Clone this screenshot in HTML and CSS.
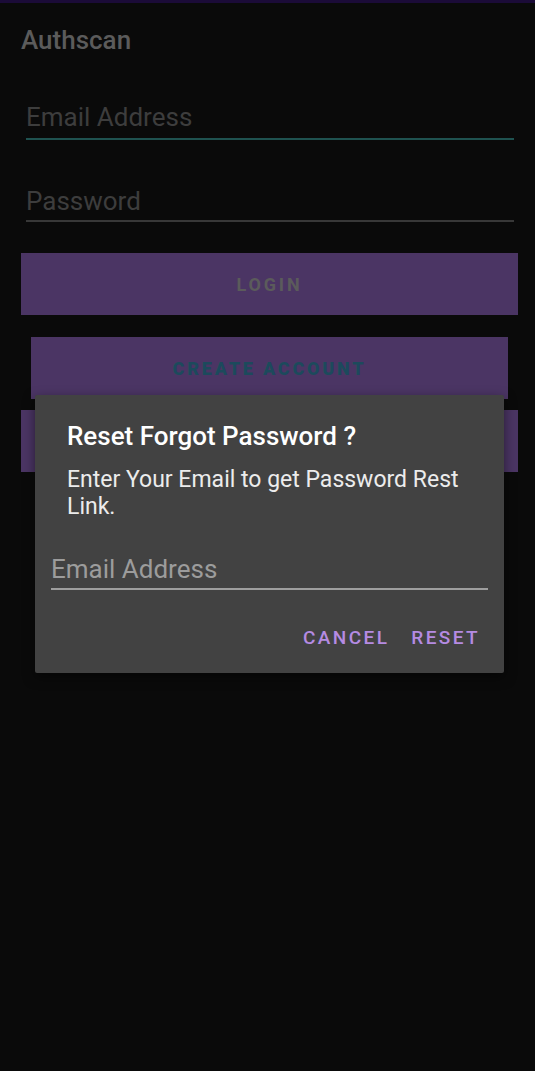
FILE: index.html
```html
<!DOCTYPE html>
<html>
<head>
<meta charset="utf-8">
<link rel="stylesheet" href="styles.css">
</head>
<body>
<div class="status"></div>
<div class="screen">
  <div class="app-title">Authscan</div>
  <div class="field field-focus"><span class="ph">Email Address</span></div>
  <div class="field field-pass"><span class="ph">Password</span></div>
  <div class="btn btn-login">LOGIN</div>
  <div class="btn btn-create">CREATE ACCOUNT</div>
  <div class="btn btn-third"></div>
</div>
<div class="dialog">
  <div class="d-title">Reset Forgot Password ?</div>
  <div class="d-msg">Enter Your Email to get Password Rest Link.</div>
  <div class="d-field"><span class="d-ph">Email Address</span></div>
  <div class="d-actions">
    <span class="d-btn">CANCEL</span>
    <span class="d-btn">RESET</span>
  </div>
</div>
</body>
</html>
```
FILE: styles.css
```css
html, body {
  margin: 0;
  padding: 0;
  background: #0a0a0a;
  font-family: Roboto, "Noto Sans", sans-serif;
  width: 535px;
  height: 1071px;
  overflow: hidden;
  position: relative;
}
.status {
  height: 3px;
  background: #1b0b38;
}
.screen {
  display: flex;
  flex-direction: column;
  padding: 0 17px 0 21px;
}
.app-title {
  margin-top: 22px;
  height: 30px;
  line-height: 30px;
  font-size: 26px;
  font-weight: 500;
  color: #5b5b5b;
}
.field {
  margin: 0 4px 0 5px;
  display: flex;
  align-items: center;
}
.ph {
  font-size: 26px;
  line-height: 32px;
  color: #3d3d3d;
}
.field-focus {
  margin-top: 46px;
  height: 32px;
  border-bottom: 2px solid #1f5250;
  padding-bottom: 5px;
}
.field-pass {
  margin-top: 45px;
  height: 32px;
  border-bottom: 2px solid #383838;
  padding-bottom: 3px;
}
.btn {
  height: 62px;
  background: #4b3564;
  display: flex;
  align-items: center;
  justify-content: center;
  font-weight: 700;
  font-size: 18px;
  letter-spacing: 2.8px;
}
.btn-login {
  margin-top: 31px;
  color: #5b5b5b;
}
.btn-create {
  margin: 22px 10px 0 10px;
  color: #1c4a5c;
  font-weight: 900;
}
.btn-third {
  margin-top: 11px;
}
.dialog {
  position: absolute;
  left: 35px;
  top: 395px;
  width: 469px;
  height: 278px;
  background: #424242;
  border-radius: 2px;
  box-sizing: border-box;
  padding: 26px 16px 0 16px;
  display: flex;
  flex-direction: column;
  box-shadow: 0 4px 12px rgba(0,0,0,0.5);
}
.d-title {
  padding: 0 16px;
  font-size: 26px;
  font-weight: 500;
  color: #ffffff;
  line-height: 30px;
}
.d-msg {
  padding: 0 16px;
  margin-top: 15px;
  font-size: 23px;
  color: #ececec;
  line-height: 27px;
}
.d-field {
  margin-top: 32px;
  height: 34px;
  padding-bottom: 2px;
  display: flex;
  align-items: center;
  border-bottom: 2px solid #9e9e9e;
}
.d-ph {
  font-size: 26px;
  color: #9c9c9c;
}
.d-actions {
  margin-top: 36px;
  display: flex;
  justify-content: flex-end;
  gap: 22px;
  padding-right: 8px;
}
.d-btn {
  font-size: 19px;
  font-weight: 500;
  letter-spacing: 2.4px;
  color: #b58be2;
  line-height: 24px;
}
```
